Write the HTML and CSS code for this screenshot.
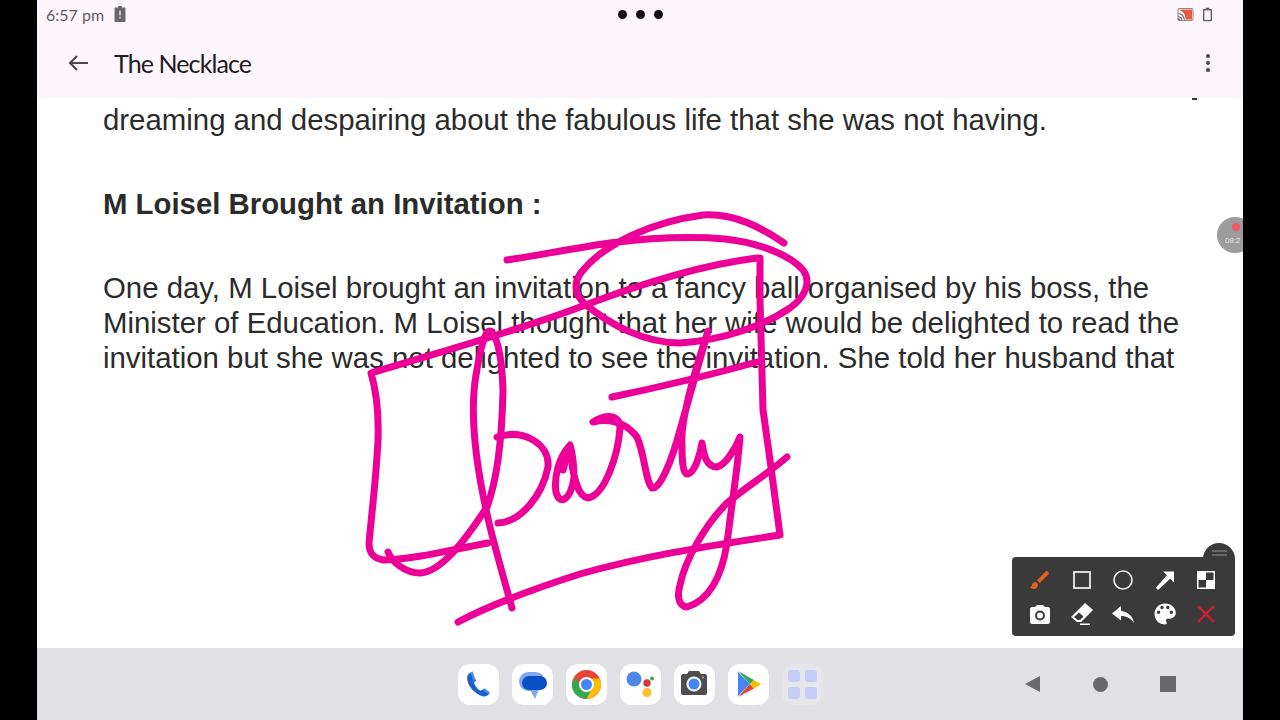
FILE: index.html
```html
<!DOCTYPE html>
<html lang="en">
<head>
    <meta charset="UTF-8">
    <meta name="viewport" content="width=device-width, initial-scale=1.0">
    <title>The Necklace</title>
    <link rel="stylesheet" href="styles.css">
</head>
<body>
    <div class="screen">
        <div class="status-bar">
            <div class="status-left">
                <span class="status-time">6:57 pm</span>
                <svg class="status-battery" viewBox="0 0 12 16"><path fill="#6a676e" d="M4 0h4v1.500h2.500c.6 0 1 .4 1 1V15c0 .6-.4 1-1 1h-9c-.6 0-1-.4-1-1V2.500c0-.6.4-1 1-1H4z"/><path fill="#d8d4da" d="M5.200 4.500h1.600v5H5.200zM5.200 10.800h1.600v1.700H5.200z"/></svg>
            </div>
            <div class="status-dots"><span></span><span></span><span></span></div>
            <div class="status-right">
                <svg class="status-cast" viewBox="0 0 16 13"><rect x="0.500" y="0.500" width="15" height="12" rx="1" fill="none" stroke="#8a888c"/><path fill="#e8583f" d="M3 1.500h11.500v10H8C8 7 6 3.500 3 3z"/><path fill="none" stroke="#77757a" stroke-width="1.200" d="M.5 5.500c3.500 0 6.500 3 6.500 7M.5 8.500c2 0 4 2 4 4"/><circle cx="1.500" cy="11.500" r="1.200" fill="#77757a"/></svg>
                <svg class="status-battery-outline" viewBox="0 0 10 15"><path fill="#5e5c62" d="M3 0h4v1.300h2c.6 0 1 .4 1 1V14c0 .6-.4 1-1 1H1c-.6 0-1-.4-1-1V2.300c0-.6.4-1 1-1h2z"/><rect x="1.500" y="3" width="7" height="10.500" fill="#fdf6fd"/></svg>
            </div>
        </div>

        <div class="app-bar">
            <svg class="back-icon" viewBox="0 0 20 16"><path fill="none" stroke="#4a474f" stroke-width="2" d="M20 8H2M9 1L2 8l7 7"/></svg>
            <h1 class="app-title">The Necklace</h1>
            <div class="more-icon"><span></span><span></span><span></span></div>
        </div>

        <main class="content">
            <div class="clipped-line"><span></span></div>
            <p class="text-block">dreaming and despairing about the fabulous life that she was not having.</p>
            <h2 class="section-title">M Loisel Brought an Invitation :</h2>
            <p class="text-block">One day, M Loisel brought an invitation to a fancy ball organised by his boss, the<br>Minister of Education. M Loisel thought that her wife would be delighted to read the<br>invitation but she was not delighted to see the invitation. She told her husband that</p>
        </main>

        <nav class="nav-bar">
            <div class="dock">
                <div class="dock-tile">
                    <svg viewBox="0 0 41 41"><path fill="#1b5fc9" d="M12.500 8.500c-2 1-3.500 3.200-3.400 5.800.2 4 2 7.800 4.900 10.900 2.900 3.200 6.600 5.900 10.800 7.100 2.200.6 4.800-.5 6.200-2.200l-5.500-5-3 1.600c-2.200-1-5-3.900-6.600-7.800l2.400-2.400z"/><path fill="#4c8df0" d="M12.500 8.500l3 8.200-2 2.400 4.200-2.700-3-8.800zM24.500 25.600l6.500 5c.7-.9 1-1.800.5-2.600l-4.800-3.700z"/></svg>
                </div>
                <div class="dock-tile">
                    <svg viewBox="0 0 41 41"><rect x="7" y="8" width="26" height="19" rx="9.500" fill="#7fa9f2"/><path fill="#7fa9f2" d="M17 24l6 11 4-10z"/><rect x="10" y="12" width="25" height="14" rx="7" fill="#0b4fc4"/></svg>
                </div>
                <div class="dock-tile">
                    <svg viewBox="0 0 41 41"><circle cx="20.500" cy="20.500" r="14.500" fill="#ea4335"/><path fill="#34a853" d="M6 20.500c0 8 6.500 14.500 14.500 14.500l5-9-10-1-5.500-11C7.500 16 6 18 6 20.500z"/><path fill="#fbbc04" d="M20.500 35c8 0 14.500-6.500 14.500-14.500 0-2.300-.5-4.200-1.500-6H20.500l5 11z"/><circle cx="20.500" cy="20.500" r="7.500" fill="#fff"/><circle cx="20.500" cy="20.500" r="5.500" fill="#4285f4"/></svg>
                </div>
                <div class="dock-tile">
                    <svg viewBox="0 0 41 41"><circle cx="14" cy="15" r="7.500" fill="#4f86ea"/><circle cx="27" cy="19" r="3.700" fill="#d93838"/><circle cx="32" cy="14.500" r="2" fill="#34a853"/><circle cx="27" cy="28.500" r="4.500" fill="#fbc02d"/></svg>
                </div>
                <div class="dock-tile">
                    <svg viewBox="0 0 41 41"><path fill="#4c4e52" d="M15 7h10l2 3h4c1 0 2 1 2 2v17c0 1-1 2-2 2H9c-1 0-2-1-2-2V12c0-1 1-2 2-2h4z"/><circle cx="20" cy="20" r="7.500" fill="#fff"/><circle cx="20" cy="20" r="5.500" fill="#4285f4"/><circle cx="29" cy="13.500" r="1" fill="#aaa"/></svg>
                </div>
                <div class="dock-tile">
                    <svg viewBox="0 0 41 41"><path fill="#4285f4" d="M10 8v24l12-12z"/><path fill="#34a853" d="M10 7l16 9-4 4z"/><path fill="#ea4335" d="M10 33l16-8.500-4-4.500z"/><path fill="#fbbc04" d="M26 16l7 4.300-7 4.200-4-4.500z"/></svg>
                </div>
                <div class="dock-tile dock-tile-faded">
                    <svg viewBox="0 0 41 41"><rect x="6" y="6" width="12" height="12" rx="3" fill="#c3cef6"/><rect x="23" y="6" width="12" height="12" rx="3" fill="#c3cef6"/><rect x="6" y="23" width="12" height="12" rx="3" fill="#c3cef6"/><rect x="23" y="23" width="12" height="12" rx="3" fill="#c3cef6"/></svg>
                </div>
            </div>
            <div class="nav-buttons">
                <span class="nav-back"></span>
                <span class="nav-home"></span>
                <span class="nav-recent"></span>
            </div>
        </nav>

        <svg class="ink" viewBox="37 0 1206 720">
            <path d="M507 260C540 255 575 248 610 243C650 238 690 236 725 239C760 243 790 255 803 270C812 282 805 297 790 308C765 325 725 340 680 343C645 343 610 325 585 304C573 293 573 280 585 268C605 245 650 222 703 215C735 213 762 228 784 243"/>
            <path d="M458 622C490 605 530 590 580 574C640 557 700 547 780 535L770 460L763 410L760 300L760 258L757 258C700 265 640 284 580 307C520 330 440 352 371 373C376 390 379 410 378 440C376 480 372 510 369 543C369 553 373 558 383 560C410 560 450 550 488 543"/>
            <path d="M388 552C392 562 405 573 420 573C440 572 462 545 487 507C497 480 502 440 503 390C502 360 498 340 492 332C486 326 481 345 476 375C470 410 474 460 490 527C497 555 507 590 512 608"/>
            <path d="M498 523C520 522 542 497 548 467C550 445 525 428 497 437"/>
            <path d="M570 445C558 458 554 478 556 492C559 505 570 502 574 478C574 465 572 452 570 445C572 475 578 497 588 498C605 495 618 455 620 428C620 417 610 412 593 422C610 418 625 422 637 437C645 455 645 480 652 488C660 490 672 460 680 430C690 395 700 360 708 331C695 370 680 420 682 445C682 462 683 475 688 474C695 472 700 455 702 443C704 455 706 467 717 467C725 465 735 450 740 437C738 465 733 495 727 543C722 575 710 600 687 607C678 606 677 595 680 585C685 560 705 525 727 503C745 488 770 472 787 457"/>
            <path d="M569 448L563 470"/>
            <path d="M612 397C660 387 710 375 757 362"/>
        </svg>

        <div class="record-badge">
            <span class="record-dot"></span>
            <span class="record-time">08:2</span>
        </div>

        <div class="menu-knob"><span></span><span></span></div>
        <div class="draw-toolbar">
            <svg viewBox="0 0 24 24"><path fill="#e8611c" d="M7 14c-1.660 0-3 1.340-3 3 0 1.310-1.160 2-2 2 .92 1.220 2.490 2 4 2 2.210 0 4-1.790 4-4 0-1.660-1.340-3-3-3zm13.710-9.370l-1.340-1.340c-.39-.39-1.020-.39-1.410 0L9 12.250 11.750 15l8.960-8.960c.39-.39.39-1.020 0-1.410z"/></svg>
            <svg viewBox="0 0 24 24"><rect x="4" y="4" width="16" height="16" fill="none" stroke="#eee" stroke-width="1.800"/></svg>
            <svg viewBox="0 0 24 24"><circle cx="12" cy="12" r="9" fill="none" stroke="#eee" stroke-width="1.600"/></svg>
            <svg viewBox="0 0 24 24"><path fill="#fff" d="M10 3.500h11v11l-3.800-3.800L5 22l-2.200-2.200L14 7.300z"/></svg>
            <svg viewBox="0 0 24 24"><rect x="3" y="3" width="18" height="18" fill="#fff"/><rect x="12" y="4.500" width="7.500" height="7.500" fill="#3a3a3a"/><rect x="4.500" y="12" width="7.500" height="7.500" fill="#3a3a3a"/></svg>
            <svg viewBox="0 0 24 24"><path fill="#fff" d="M9 3L7.170 5H4c-1.100 0-2 .9-2 2v13c0 1.100.9 2 2 2h16c1.100 0 2-.9 2-2V7c0-1.100-.9-2-2-2h-3.170L15 3H9z"/><circle cx="12" cy="13.500" r="4" fill="none" stroke="#3a3a3a" stroke-width="2"/></svg>
            <svg viewBox="0 0 24 24"><path fill="#fff" d="M15 1l8 7-12 12H7l-6-5zM4 15l3.500 3h2.500l3.500-3.500-4.500-4z"/><path fill="#fff" d="M10 21.500h10V23H10z"/></svg>
            <svg viewBox="0 0 24 24"><path fill="#fff" d="M10 9V4l-9 7.500 9 7V14c5.500 0 9.500 2 13 7-1-6-5-11-13-12z"/></svg>
            <svg viewBox="0 0 24 24"><path fill="#fff" d="M12 1.500c-5.800 0-10.500 4.700-10.500 10.500S6.200 22.500 12 22.500c1 0 1.750-.8 1.750-1.750 0-.45-.17-.86-.45-1.180-.27-.3-.44-.71-.44-1.150 0-.97.78-1.750 1.750-1.750h2.390c3.200 0 5.800-2.600 5.800-5.800 0-5.150-4.700-9.370-10.800-9.370zM5.500 12a1.750 1.750 0 1 1 0-3.500 1.750 1.750 0 0 1 0 3.500zm3.500-4.700a1.750 1.750 0 1 1 0-3.500 1.750 1.750 0 0 1 0 3.500zm5.800 0a1.750 1.750 0 1 1 0-3.500 1.750 1.750 0 0 1 0 3.500zm3.500 4.700a1.750 1.750 0 1 1 0-3.500 1.750 1.750 0 0 1 0 3.500z"/></svg>
            <svg viewBox="0 0 24 24"><path fill="none" stroke="#d01f2c" stroke-width="2.400" d="M4 4l16 16M20 4L4 20"/></svg>
        </div>
    </div>
</body>
</html>
```

FILE: styles.css
```css
html, body {
    margin: 0;
    padding: 0;
    height: 720px;
    background-color: #000;
    overflow: hidden;
}
.screen {
    position: relative;
    display: flex;
    flex-direction: column;
    width: 1206px;
    height: 720px;
    margin-left: 37px;
    background-color: #fff;
    overflow: hidden;
    font-family: 'Liberation Sans', Arial, sans-serif;
}

/* status bar */
.status-bar {
    display: grid;
    grid-template-columns: 1fr auto 1fr;
    align-items: center;
    height: 28px;
    background-color: #fdf6fd;
    font-family: Lato, sans-serif;
}
.status-left {
    display: flex;
    align-items: center;
    gap: 10px;
    padding-left: 9px;
}
.status-time {
    font-size: 16px;
    color: #5e5c62;
}
.status-battery {
    width: 12px;
    height: 16px;
}
.status-dots {
    display: flex;
    gap: 9px;
}
.status-dots span {
    width: 9px;
    height: 9px;
    border-radius: 50%;
    background-color: #111;
}
.status-right {
    display: flex;
    justify-content: flex-end;
    align-items: center;
    gap: 9px;
    padding-right: 31px;
}
.status-cast {
    width: 17px;
    height: 13px;
}
.status-battery-outline {
    width: 9px;
    height: 15px;
}

/* app bar */
.app-bar {
    display: flex;
    align-items: center;
    height: 70px;
    padding: 0 33px 0 31px;
    background-color: #fdf6fd;
}
.back-icon {
    width: 20px;
    height: 16px;
}
.app-title {
    flex: 1;
    margin: 0 0 0 26px;
    font-family: Lato, sans-serif;
    font-size: 25px;
    font-weight: 400;
    letter-spacing: -0.9px;
    color: #1d1b20;
}
.more-icon {
    display: flex;
    flex-direction: column;
    gap: 3px;
}
.more-icon span {
    width: 4px;
    height: 4px;
    border-radius: 50%;
    background-color: #47454c;
}

/* page content */
.content {
    flex: 1;
    padding: 0 0 0 66px;
    color: #2b2b2b;
}
.clipped-line {
    display: flex;
    justify-content: flex-end;
    height: 4px;
    padding-right: 46px;
}
.clipped-line span {
    width: 5px;
    height: 2px;
    background-color: #333;
}
.text-block {
    margin: 0;
    font-size: 29.39px;
    line-height: 35px;
    white-space: nowrap;
}
.section-title {
    margin: 49px 0;
    font-size: 29.35px;
    line-height: 35px;
    font-weight: 700;
}

/* bottom nav */
.nav-bar {
    position: relative;
    display: flex;
    justify-content: center;
    align-items: center;
    height: 72px;
    background-color: #e1e0e5;
}
.dock {
    display: flex;
    gap: 13px;
}
.dock-tile {
    width: 41px;
    height: 41px;
    border-radius: 12px;
    background-color: #fff;
}
.dock-tile svg {
    display: block;
    width: 41px;
    height: 41px;
}
.dock-tile-faded {
    background-color: #e6e5ec;
}
.nav-buttons {
    position: absolute;
    top: 0;
    left: 988px;
    display: flex;
    align-items: center;
    gap: 52.5px;
    height: 72px;
}
.nav-back {
    width: 0;
    height: 0;
    border-top: 8px solid transparent;
    border-bottom: 8px solid transparent;
    border-right: 15px solid #6a686e;
}
.nav-home {
    width: 15px;
    height: 15px;
    border-radius: 50%;
    background-color: #6a686e;
}
.nav-recent {
    width: 16px;
    height: 16px;
    background-color: #6a686e;
}

/* drawn on top of the page */
.ink {
    position: absolute;
    top: 0;
    left: 0;
    width: 1206px;
    height: 720px;
    pointer-events: none;
}
.ink path {
    fill: none;
    stroke: #ec0097;
    stroke-width: 7;
    stroke-linecap: round;
    stroke-linejoin: round;
}
.record-badge {
    position: absolute;
    top: 217px;
    left: 1180px;
    width: 36px;
    height: 36px;
    border-radius: 50%;
    background-color: #9c9c9c;
}
.record-dot {
    position: absolute;
    top: 6px;
    left: 15px;
    width: 8px;
    height: 8px;
    border-radius: 50%;
    background-color: #f4565f;
}
.record-time {
    position: absolute;
    top: 19px;
    left: 8px;
    font-size: 8px;
    color: #e4e4e4;
}
.menu-knob {
    position: absolute;
    top: 543px;
    left: 1166px;
    display: flex;
    flex-direction: column;
    align-items: center;
    gap: 2px;
    box-sizing: border-box;
    width: 32px;
    height: 32px;
    padding-top: 7px;
    border-radius: 50%;
    background-color: #3a3a3a;
}
.menu-knob span {
    width: 15px;
    height: 2px;
    background-color: #666;
}
.draw-toolbar {
    position: absolute;
    top: 557px;
    left: 975px;
    display: grid;
    grid-template-columns: repeat(5, 24px);
    grid-auto-rows: 24px;
    column-gap: 17.5px;
    row-gap: 10px;
    box-sizing: border-box;
    width: 223px;
    height: 79px;
    padding: 11px 0 0 16px;
    border-radius: 4px;
    background-color: #3a3a3a;
}
.draw-toolbar svg {
    display: block;
    width: 24px;
    height: 24px;
}
```
